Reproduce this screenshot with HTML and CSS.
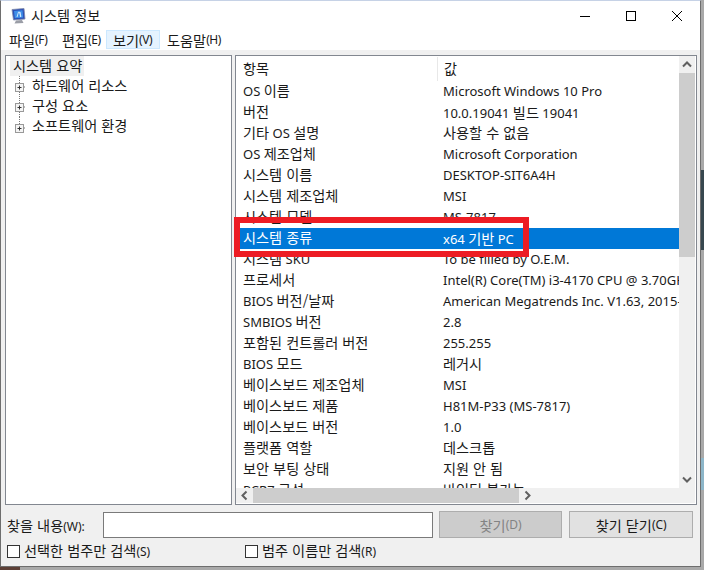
FILE: index.html
```html
<!DOCTYPE html>
<html lang="ko">
<head>
<meta charset="utf-8">
<title>시스템 정보</title>
<link rel="stylesheet" href="styles.css">
</head>
<body>
<div class="desk">
  <span class="strip strip-dark"></span>
  <span class="strip strip-blue"></span>
  <span class="under under-brown"></span>
  <div class="window">
    <header class="titlebar">
      <svg class="appicon" width="16" height="16" viewBox="0 0 16 16">
        <path d="M1 1.5 L13 0.5 L14 11 L2.5 12 Z" fill="#2b4fb8" stroke="#7f8aa8" stroke-width="0.8"/>
        <path d="M3 3 L11.5 2.3 L12.2 9.5 L3.8 10.2 Z" fill="#3f8fe8"/>
        <path d="M6 9 L7.5 4 L8.5 4 L10 8.5 M9 4 L9.5 9" fill="none" stroke="#dbeeff" stroke-width="0.9"/>
        <path d="M5 12.5 L11 12 L12.5 15 L3.5 15.5 Z" fill="#9a9da6"/>
      </svg>
      <span class="title k">시스템 정보</span>
      <div class="controls">
        <svg width="14" height="14" viewBox="0 0 14 14"><path d="M2 7.5H12" stroke="#000" fill="none"/></svg>
        <svg width="14" height="14" viewBox="0 0 14 14"><rect x="2.5" y="2.5" width="9" height="9" stroke="#000" fill="none"/></svg>
        <svg width="14" height="14" viewBox="0 0 14 14"><path d="M2 2L12 12M12 2L2 12" stroke="#000" fill="none"/></svg>
      </div>
    </header>
    <nav class="menubar">
      <span class="menu m1"><span class="k">파일</span>(F)</span>
      <span class="menu m2"><span class="k">편집</span>(E)</span>
      <span class="menu m3 active"><span class="k">보기</span>(V)</span>
      <span class="menu m4"><span class="k">도움말</span>(H)</span>
    </nav>
    <main class="panes">
      <section class="tree k">
        <div class="tree-row root"><span class="tree-sel">시스템 요약</span></div>
        <div class="tree-row"><svg class="exp" width="20" height="21" viewBox="0 0 20 21"><path d="M9.5 0V21M10 11H15" stroke="#777" stroke-dasharray="1 1" fill="none"/><rect x="5.5" y="7.5" width="8" height="8" fill="#f4f4f4" stroke="#999"/><path d="M7.5 11.5H11.5M9.5 9.5V13.5" stroke="#333" fill="none"/></svg><span class="tree-label">하드웨어 리소스</span></div>
        <div class="tree-row"><svg class="exp" width="20" height="21" viewBox="0 0 20 21"><path d="M9.5 0V21M10 11H15" stroke="#777" stroke-dasharray="1 1" fill="none"/><rect x="5.5" y="7.5" width="8" height="8" fill="#f4f4f4" stroke="#999"/><path d="M7.5 11.5H11.5M9.5 9.5V13.5" stroke="#333" fill="none"/></svg><span class="tree-label">구성 요소</span></div>
        <div class="tree-row"><svg class="exp" width="20" height="21" viewBox="0 0 20 21"><path d="M9.5 0V11M10 11H15" stroke="#777" stroke-dasharray="1 1" fill="none"/><rect x="5.5" y="7.5" width="8" height="8" fill="#f4f4f4" stroke="#999"/><path d="M7.5 11.5H11.5M9.5 9.5V13.5" stroke="#333" fill="none"/></svg><span class="tree-label">소프트웨어 환경</span></div>
      </section>
      <section class="details">
        <div class="list-wrap">
          <div class="list">
            <div class="list-head"><span class="c1 k">항목</span><span class="c2 k">값</span></div>
            <div class="row"><span class="c1">OS <span class="k">이름</span></span><span class="c2">Microsoft Windows 10 Pro</span></div>
            <div class="row"><span class="c1 k">버전</span><span class="c2">10.0.19041 <span class="k">빌드</span> 19041</span></div>
            <div class="row"><span class="c1"><span class="k">기타</span> OS <span class="k">설명</span></span><span class="c2 k">사용할 수 없음</span></div>
            <div class="row"><span class="c1">OS <span class="k">제조업체</span></span><span class="c2">Microsoft Corporation</span></div>
            <div class="row"><span class="c1 k">시스템 이름</span><span class="c2">DESKTOP-SIT6A4H</span></div>
            <div class="row"><span class="c1 k">시스템 제조업체</span><span class="c2">MSI</span></div>
            <div class="row"><span class="c1 k">시스템 모델</span><span class="c2">MS-7817</span></div>
            <div class="row selected"><span class="c1 k">시스템 종류</span><span class="c2">x64 <span class="k">기반</span> PC</span></div>
            <div class="row"><span class="c1"><span class="k">시스템</span> SKU</span><span class="c2">To be filled by O.E.M.</span></div>
            <div class="row"><span class="c1 k">프로세서</span><span class="c2">Intel(R) Core(TM) i3-4170 CPU @ 3.70GHz, 3700Mhz</span></div>
            <div class="row"><span class="c1">BIOS <span class="k">버전/날짜</span></span><span class="c2">American Megatrends Inc. V1.63, 2015-07-01</span></div>
            <div class="row"><span class="c1">SMBIOS <span class="k">버전</span></span><span class="c2">2.8</span></div>
            <div class="row"><span class="c1 k">포함된 컨트롤러 버전</span><span class="c2">255.255</span></div>
            <div class="row"><span class="c1">BIOS <span class="k">모드</span></span><span class="c2 k">레거시</span></div>
            <div class="row"><span class="c1 k">베이스보드 제조업체</span><span class="c2">MSI</span></div>
            <div class="row"><span class="c1 k">베이스보드 제품</span><span class="c2">H81M-P33 (MS-7817)</span></div>
            <div class="row"><span class="c1 k">베이스보드 버전</span><span class="c2">1.0</span></div>
            <div class="row"><span class="c1 k">플랫폼 역할</span><span class="c2 k">데스크톱</span></div>
            <div class="row"><span class="c1 k">보안 부팅 상태</span><span class="c2 k">지원 안 됨</span></div>
            <div class="row"><span class="c1">PCR7 <span class="k">구성</span></span><span class="c2 k">바인딩 불가능</span></div>
          </div>
          <div class="vbar">
            <svg class="arrow" width="16" height="17" viewBox="0 0 16 17"><path d="M4 10.5L8 6.5L12 10.5" stroke="#606060" stroke-width="2" fill="none"/></svg>
            <div class="vthumb"></div>
            <svg class="arrow arrow-end" width="16" height="17" viewBox="0 0 16 17"><path d="M4 6.5L8 10.5L12 6.5" stroke="#606060" stroke-width="2" fill="none"/></svg>
          </div>
        </div>
        <div class="hbar">
          <svg class="arrow" width="17" height="15" viewBox="0 0 17 15"><path d="M10.5 3.5L6.5 7.5L10.5 11.5" stroke="#606060" stroke-width="2" fill="none"/></svg>
          <div class="hthumb"></div>
          <svg class="arrow arrow-end" width="17" height="15" viewBox="0 0 17 15"><path d="M6.5 3.5L10.5 7.5L6.5 11.5" stroke="#606060" stroke-width="2" fill="none"/></svg>
        </div>
      </section>
      <div class="callout"></div>
    </main>
    <footer class="finder">
      <div class="find-row">
        <label class="find-label"><span class="k">찾을 내용</span><span class="par">(W):</span></label>
        <div class="find-input"></div>
        <div class="btn btn-disabled"><span class="k">찾기</span><span class="par">(D)</span></div>
        <div class="btn"><span class="k">찾기 닫기</span><span class="par">(C)</span></div>
      </div>
      <div class="check-row">
        <label class="check c-a"><span class="box"></span><span class="check-text"><span class="k">선택한 범주만 검색</span><span class="par">(S)</span></span></label>
        <label class="check"><span class="box"></span><span class="check-text"><span class="k">범주 이름만 검색</span><span class="par">(R)</span></span></label>
      </div>
    </footer>
  </div>
</div>
</body>
</html>
```
FILE: styles.css
```css
* { box-sizing: border-box; }
html, body { margin: 0; padding: 0; background: #fff; }
body {
  width: 708px;
  height: 573px;
  overflow: hidden;
  font-family: "Noto Sans", "Noto Sans CJK KR", sans-serif;
  font-size: 13px;
  color: #1a1a1a;
}
.k { font-family: "Noto Sans CJK KR", sans-serif; font-size: 14.2px; }
.par { font-size: 12px; }
.desk {
  position: relative;
  width: 704px;
  height: 570px;
  background: #a9a9a9;
}
.strip { position: absolute; right: 0; width: 3px; }
.strip-dark { top: 170px; height: 80px; background: #37474f; }
.strip-blue { top: 458px; height: 32px; background: #8db6c9; }
.under { position: absolute; bottom: 0; height: 3px; }
.under-brown { left: 0; width: 20px; background: #5d4037; }
.window {
  position: relative;
  width: 701px;
  height: 567px;
  display: flex;
  flex-direction: column;
  background: #f0f0f0;
  border: 1px solid #6e6e6e;
  border-top: 1px solid #c6d2e6;
}
.titlebar {
  height: 29px;
  display: flex;
  align-items: center;
  background: #fff;
  padding-left: 10px;
  flex: none;
}
.appicon { flex: none; }
.title { margin-left: 4px; padding-bottom: 2px; }
.controls {
  margin-left: auto;
  display: flex;
  gap: 32px;
  padding-right: 16px;
}
.menubar {
  height: 20px;
  flex: none;
  display: flex;
  background: #fff;
  font-size: 12px;
  letter-spacing: -0.5px;
}
.menubar .k { letter-spacing: 0; }
.menu { display: flex; align-items: center; height: 19px; }
.m1 { margin-left: 8px; width: 53px; }
.m2 { width: 44px; }
.m3 { width: 54px; padding-left: 6px; background: #e5f3ff; border: 1px solid #cce8ff; }
.m4 { margin-left: 7px; }
.panes {
  position: relative;
  flex: none;
  display: flex;
  margin: 5px 0 0 4px;
  height: 450px;
  gap: 3px;
}
.tree {
  width: 227px;
  background: #fff;
  border: 1px solid #828790;
  padding: 0 0 0 4px;
}
.tree-row {
  height: 20.4px;
  display: flex;
  align-items: center;
  white-space: nowrap;
}
.tree-label { padding-bottom: 4px; }
.tree-sel {
  background: #f0f0f0;
  width: 74px;
  height: 20px;
  display: flex;
  align-items: center;
  padding: 0 0 2px 3px;
}
.exp { flex: none; margin: 0 2px 0 0; }
.details {
  width: 462px;
  display: flex;
  flex-direction: column;
  background: #fff;
  border: 1px solid #828790;
  padding-bottom: 1px;
}
.list-wrap { display: flex; height: 432px; flex: none; }
.list { width: 443px; overflow: hidden; flex: none; }
.list-head, .row { display: flex; white-space: nowrap; align-items: center; }
.list-head { height: 25px; }
.row { height: 21px; padding-bottom: 2px; }
.c1 { width: 201px; padding: 0 0 2px 7px; flex: none; }
.c2 { padding-left: 6px; flex: none; }
.c2.k { padding-bottom: 2px; }
.list-head .c2 { border-left: 1px solid #e8e8e8; height: 24px; line-height: 22px; padding-bottom: 0; }
.selected { background: #0078d7; color: #fff; }
.vbar {
  width: 16px;
  background: #f0f0f0;
  display: flex;
  flex-direction: column;
}
.arrow { flex: none; display: block; }
.arrow-end { margin-top: auto; }
.vthumb { height: 184px; background: #cdcdcd; }
.hbar {
  height: 15px;
  width: 459px;
  background: #f0f0f0;
  display: flex;
  flex: none;
}
.hthumb { width: 266px; background: #cdcdcd; }
.callout {
  position: absolute;
  left: 229px;
  top: 162px;
  width: 295px;
  height: 40px;
  border: 6px solid #ed1c24;
}
.finder { flex: none; padding: 6px 7px 0 6px; }
.find-row { display: flex; align-items: center; height: 27px; }
.find-label { width: 96px; }
.find-input {
  width: 331px;
  height: 26px;
  background: #fff;
  border: 1px solid #7a7a7a;
}
.btn {
  width: 124px;
  height: 27px;
  margin-left: 7px;
  display: flex;
  align-items: center;
  justify-content: center;
  background: #e1e1e1;
  border: 1px solid #adadad;
}
.btn-disabled { margin-left: 6px; background: #cccccc; color: #838383; }
.check-row { display: flex; margin-top: 6px; height: 14px; }
.check { display: flex; align-items: center; white-space: nowrap; }
.check-text { padding-bottom: 2px; }
.c-a { width: 238px; }
.box {
  width: 13px;
  height: 13px;
  background: #fff;
  border: 1px solid #333;
  margin-right: 4px;
  flex: none;
}
```
